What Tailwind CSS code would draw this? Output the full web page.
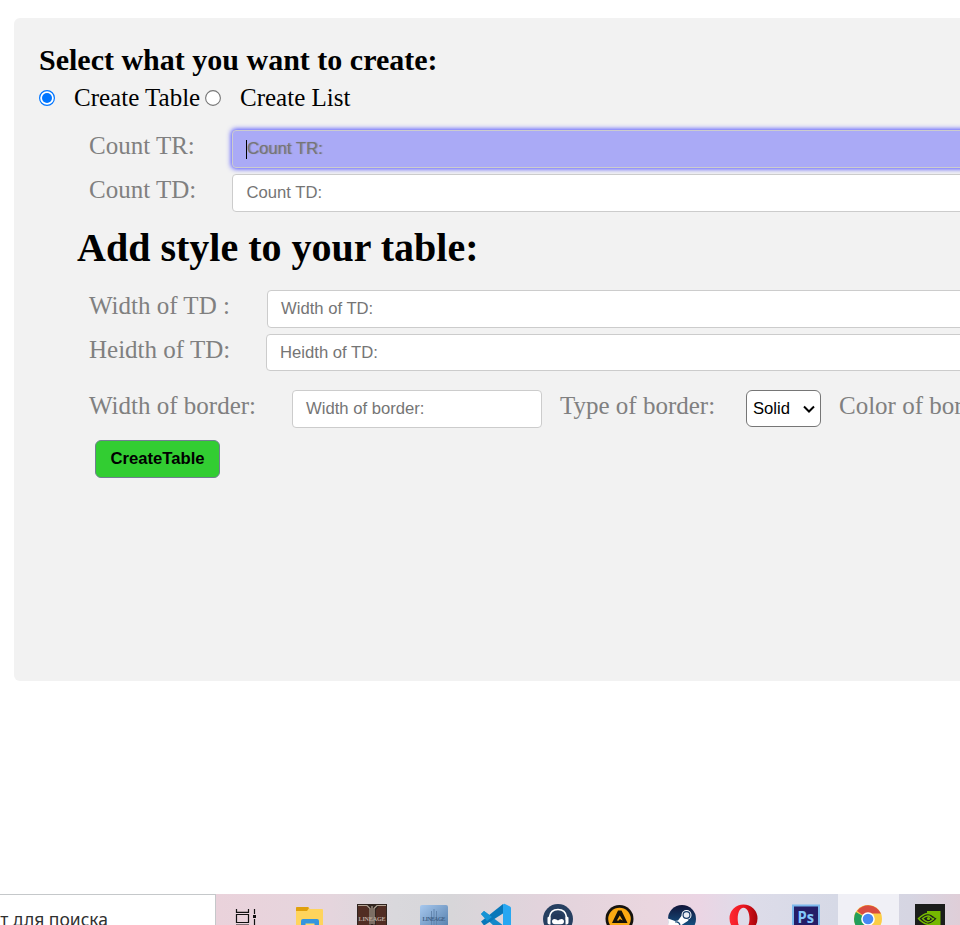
<!DOCTYPE html>
<html lang="en">
<head>
<meta charset="utf-8">
<title>Create table</title>
<script src="https://cdn.jsdelivr.net/npm/@tailwindcss/browser@4"></script>
</head>
<body class="w-[960px] h-[925px] overflow-hidden bg-white flex flex-col font-['Liberation_Serif',serif] text-[25px] leading-7">
<main class="h-[894px] shrink-0 pt-[18px] pl-[14px] overflow-hidden">
  <section class="w-[1200px] h-[663px] bg-[#f2f2f2] rounded-md pl-[25px] pt-[26px]">
    <h3 class="text-[30px] leading-8 font-bold text-black">Select what you want to create:</h3>
    <div class="flex items-center h-7 mt-2 text-black whitespace-nowrap">
      <svg class="w-4 h-4" viewBox="0 0 16 16"><circle cx="8" cy="8" r="7.4" fill="#fff" stroke="#0075ff" stroke-width="1.2"/><circle cx="8" cy="8" r="5" fill="#0075ff"/></svg>
      <span class="ml-[19px] w-[132px]">Create Table</span>
      <svg class="w-4 h-4 -ml-px" viewBox="0 0 16 16"><circle cx="8" cy="8" r="7.4" fill="#fff" stroke="#767676" stroke-width="1.1"/></svg>
      <span class="ml-[19px]">Create List</span>
    </div>
    <form class="pl-[50px] mt-[18px] text-[#808080] whitespace-nowrap">
      <div class="flex items-start h-11">
        <label class="w-[143px] shrink-0 pt-0.5">Count TR:</label>
        <div class="w-[900px] shrink-0 h-[38px] rounded border border-[#ccc] bg-[#aaaaf6] shadow-[0_0_5px_1px_#5050ff] pl-[13px] flex items-center font-['Liberation_Sans',sans-serif] text-[16.67px] text-[#757575] [text-shadow:1px_0_1px_#75757599]"><span class="w-px h-[19px] bg-black"></span><span>Count TR:</span></div>
      </div>
      <div class="flex items-start h-[52px]">
        <label class="w-[143px] shrink-0 pt-0.5">Count TD:</label>
        <div class="w-[900px] shrink-0 h-[38px] rounded border border-[#ccc] bg-white pl-[13.5px] pb-px flex items-center font-['Liberation_Sans',sans-serif] text-[16.67px] text-[#757575]">Count TD:</div>
      </div>
      <h2 class="-ml-3 h-16 text-[40px] leading-[44px] font-bold text-black">Add style to your table:</h2>
      <div class="flex items-start h-11">
        <label class="w-[178px] shrink-0 pt-0.5">Width of TD :</label>
        <div class="w-[900px] shrink-0 h-[38px] rounded border border-[#ccc] bg-white pl-[13px] pb-px flex items-center font-['Liberation_Sans',sans-serif] text-[16.67px] text-[#757575]">Width of TD:</div>
      </div>
      <div class="flex items-start h-14">
        <label class="w-[177px] shrink-0 pt-0.5">Heidth of TD:</label>
        <div class="w-[900px] shrink-0 h-[37px] rounded border border-[#ccc] bg-white pl-[13px] flex items-center font-['Liberation_Sans',sans-serif] text-[16.67px] text-[#757575]">Heidth of TD:</div>
      </div>
      <div class="flex items-start h-[50px]">
        <label class="w-[203px] shrink-0 pt-0.5">Width of border:</label>
        <div class="w-[250px] shrink-0 h-[38px] rounded border border-[#ccc] bg-white pl-[13px] pb-px flex items-center font-['Liberation_Sans',sans-serif] text-[16.67px] text-[#757575]">Width of border:</div>
        <label class="w-[186px] shrink-0 ml-[18px] pt-0.5">Type of border:</label>
        <div class="w-[75px] shrink-0 h-[37px] rounded-md border border-[#767676] bg-white pl-1.5 flex items-center font-['Liberation_Sans',sans-serif] text-[16.67px] text-black"><span class="w-[50px]">Solid</span><svg class="w-3 h-3" viewBox="0 0 12 12" fill="none" stroke="#000" stroke-width="2"><path d="M1 3.5L6 8.5L11 3.5"/></svg></div>
        <label class="ml-[18px] pt-0.5">Color of border:</label>
      </div>
      <button type="button" class="block ml-1.5 w-[125px] h-[38px] rounded-md border border-[#708090] bg-[#32cd32] pb-px font-['Liberation_Sans',sans-serif] font-bold text-[16.67px] leading-5 text-black">CreateTable</button>
    </form>
  </section>
</main>
<footer class="h-[31px] shrink-0 flex overflow-hidden bg-[linear-gradient(90deg,#ead2db_216px,#e5d5dd_330px,#d9d8dc_395px,#d7d6d9_450px,#e2d3dc_540px,#ead6df_650px,#ebd5e4_700px,#dddce9_750px,#d6d9e6_835px,#d6d5e2_910px,#dfced8_960px)]">
  <div class="w-[216px] shrink-0 h-[40px] bg-white border-t border-r border-[#c5c8ca] pt-3 pr-[107px] flex justify-end whitespace-nowrap font-['Noto_Sans',sans-serif] text-[17.5px] leading-6 text-[#303030]">т для поиска</div>
  <svg class="ml-px w-[62px] h-[31px] shrink-0" viewBox="217 894 62 31" fill="none" stroke="#111" stroke-width="1.2"><path d="M236.5 909v3.4h12V909M236.5 914.5h12v8h-12zM236 925h13M254.5 909v5M254.5 919v6"/><path d="M253 915h3v3h-3z" fill="#111" stroke="none"/></svg>
  <svg class="w-[62px] h-[31px] shrink-0" viewBox="279 894 62 31"><path d="M296 908q0-1 1-1h11l2 2h12q1 0 1 1v16h-27z" fill="#ffd45c"/><path d="M296 908q0-1 1-1h11l1 1-2 3h-11z" fill="#e0a00c"/><path d="M301 926v-5q0-2 2-2h14q2 0 2 2v5z" fill="#3595df"/><path d="M305.5 923.5h9v3h-9z" fill="#ffda70"/></svg>
  <svg class="w-[62px] h-[31px] shrink-0" viewBox="341 894 62 31"><path d="M357 904h30v22h-30z" fill="#302520"/><path d="M358 906h9l2 4v15h-11zM376 910l3-4h7v19h-10z" fill="#512d23"/><path d="M358 905.5h9l3 3v16M386 905.5h-9l-3 3v16M372 906v18" fill="none" stroke="#b1a293" stroke-width="1.2"/><text x="372" y="921" text-anchor="middle" textLength="27" font-family="Liberation Serif" font-size="6" font-weight="bold" fill="#b9aca2">LINEAGE</text></svg>
  <svg class="w-[62px] h-[31px] shrink-0" viewBox="403 894 62 31"><defs><linearGradient id="blue" x1="0" y1="0" x2="1" y2="1"><stop stop-color="#a7c8ee"/><stop offset="1" stop-color="#517ca9"/></linearGradient></defs><rect x="420" y="905" width="28" height="25" rx="2" fill="url(#blue)"/><path d="M431.5 911v14M434 909v16M436.5 911v14" stroke="#6285ae" stroke-width="1"/><text x="434" y="920.5" text-anchor="middle" textLength="23" font-family="Liberation Serif" font-size="5.5" font-weight="bold" fill="#405f85">LINEAGE</text></svg>
  <svg class="w-[62px] h-[31px] shrink-0" viewBox="465 894 62 31"><path d="M481 914l3-3 20 15h-10z" fill="#1589ca"/><path d="M481 921.5l22-17.5v9.500l-19 12z" fill="#0877b9"/><path d="M481 914l3-3 8 6-5 4z" fill="#1694d5"/><path d="M503 904.500q1-1 2-.5l5 2.500q1 .5 1 1.500v18h-8z" fill="#27a7f2"/></svg>
  <svg class="w-[62px] h-[31px] shrink-0" viewBox="527 894 62 31"><circle cx="558" cy="919" r="15" fill="#263f60"/><path d="M549.5 920v-3q1-7.500 8.500-7.500t8.500 7.500v3" fill="none" stroke="#fff" stroke-width="1.7"/><path d="M547.500 918q0-1.500 3-1.500v8q-3 0-3-2zM565.500 916.500q3 0 3 1.500v4.500q0 2-3 2z" fill="#fff"/><path d="M552 921q0-7 6-7t6 7z" fill="#22395a"/><path d="M552 921.500q0-2.500 2.500-2.500 2 .3 3.500 1.500 1.500-1.200 3.500-1.500 2.500 0 2.500 2.500 0 2.500-3 2.700h-6q-3-.2-3-2.700z" fill="#fff"/></svg>
  <svg class="w-[62px] h-[31px] shrink-0" viewBox="589 894 62 31"><circle cx="619.500" cy="919" r="14" fill="#15130f"/><circle cx="619.500" cy="919" r="11.300" fill="#fba912"/><path fill-rule="evenodd" d="M618 910.500h3.500l6 12.500h-15.500zM619.800 915.500l-3 5h2l1-1.500 3 1.500z" fill="#171207"/></svg>
  <svg class="w-[62px] h-[31px] shrink-0" viewBox="651 894 62 31"><defs><linearGradient id="steam" x1="0" y1="0" x2="0" y2="1"><stop stop-color="#101438"/><stop offset="1" stop-color="#17659a"/></linearGradient></defs><circle cx="682" cy="919" r="14" fill="url(#steam)"/><path d="M668 918.500l7 2.500 3-.5 4.500-6 6 6-7 4.500-2 1h-11z" fill="#fff"/><circle cx="686.500" cy="915" r="5" fill="#fff"/><circle cx="686.500" cy="915" r="3.400" fill="#e9edf4" stroke="#173b68" stroke-width="1.200"/><path d="M675 922q4-1 5 3" fill="none" stroke="#174875" stroke-width="1.200"/></svg>
  <svg class="w-[62px] h-[31px] shrink-0" viewBox="713 894 62 31"><defs><linearGradient id="opera" x1="0" y1="0" x2="1" y2="0"><stop stop-color="#ff2932"/><stop offset=".5" stop-color="#e91620"/><stop offset="1" stop-color="#a50409"/></linearGradient></defs><path fill-rule="evenodd" d="M743.500 904.500a14 14 0 1 1 0 28 14 14 0 0 1 0-28m0 3.200c-3.800 0-5.800 5-5.800 11s2 10 5.800 10 6-4 6-10-2.200-11-6-11" fill="url(#opera)"/></svg>
  <svg class="w-[62px] h-[31px] shrink-0" viewBox="775 894 62 31"><path d="M792 904.500h28v24h-28z" fill="#7db9ed"/><path d="M794 906.500h24v20h-24z" fill="#251d67"/><text x="797.500" y="923" font-family="Open Sans" font-size="16" font-weight="700" textLength="16.500" lengthAdjust="spacingAndGlyphs" fill="#83c7fb">Ps</text></svg>
  <svg class="ml-px w-[61px] h-[31px] shrink-0 bg-[#f0f0f6]" viewBox="838 894 61 31"><circle cx="868" cy="919" r="14" fill="#fccd45"/><path d="M868 919L855.900 912A14 14 0 0 0 868 933z" fill="#229e5b"/><path d="M868 919l-11-8a14 14 0 0 1 24 2.500h-13z" fill="#d94c40"/><circle cx="868" cy="919" r="6.800" fill="#fff"/><circle cx="868" cy="919" r="5.300" fill="#4788f4"/></svg>
  <svg class="w-[61px] h-[31px] shrink-0" viewBox="899 894 61 31"><path d="M915 904h30v22h-30z" fill="#1b1d1b"/><path d="M927 911h13.500v15H927z" fill="#76b900"/><g fill="none" stroke-width="1.500"><path d="M918.500 918.500q8-7.500 13-4t6 4q-4 5-9 6-6-1-10-6z" fill="#1b1d1b" stroke="#76b900"/><path d="M922.500 918.500q5-4 8-1.500t3 2q-3 3-6 3-3-1-5-3.500z" stroke="#76b900"/><circle cx="928.500" cy="918.500" r="1.600" fill="#76b900" stroke="none"/></g></svg>
</footer>
</body>
</html>
